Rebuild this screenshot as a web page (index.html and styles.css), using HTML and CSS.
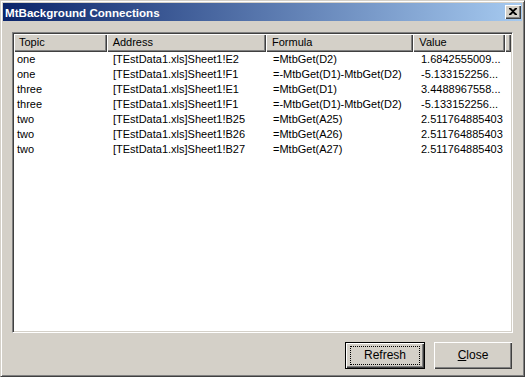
FILE: index.html
```html
<!DOCTYPE html>
<html>
<head>
<meta charset="utf-8">
<link rel="stylesheet" href="styles.css">
</head>
<body>
<div class="window">
  <div class="titlebar">
    <span class="title">MtBackground Connections</span>
    <button class="tb-close" aria-label="Close">
      <svg width="8" height="7" viewBox="0 0 8 7"><path d="M0 0h2l2 2 2-2h2v1L5 3.5 8 6v1H6L4 5 2 7H0V6l3-2.5L0 1z" fill="#000"/></svg>
    </button>
  </div>
  <div class="content">
    <div class="list">
      <div class="header">
        <div class="hcell c1">Topic</div>
        <div class="hcell c2">Address</div>
        <div class="hcell c3">Formula</div>
        <div class="hcell c4">Value</div>
        <div class="hcell filler"></div>
      </div>
      <div class="rows">
        <div class="row"><span class="c1">one</span><span class="c2">[TEstData1.xls]Sheet1!E2</span><span class="c3">=MtbGet(D2)</span><span class="c4">1.6842555009...</span></div>
        <div class="row"><span class="c1">one</span><span class="c2">[TEstData1.xls]Sheet1!F1</span><span class="c3">=-MtbGet(D1)-MtbGet(D2)</span><span class="c4">-5.133152256...</span></div>
        <div class="row"><span class="c1">three</span><span class="c2">[TEstData1.xls]Sheet1!E1</span><span class="c3">=MtbGet(D1)</span><span class="c4">3.4488967558...</span></div>
        <div class="row"><span class="c1">three</span><span class="c2">[TEstData1.xls]Sheet1!F1</span><span class="c3">=-MtbGet(D1)-MtbGet(D2)</span><span class="c4">-5.133152256...</span></div>
        <div class="row"><span class="c1">two</span><span class="c2">[TEstData1.xls]Sheet1!B25</span><span class="c3">=MtbGet(A25)</span><span class="c4">2.511764885403</span></div>
        <div class="row"><span class="c1">two</span><span class="c2">[TEstData1.xls]Sheet1!B26</span><span class="c3">=MtbGet(A26)</span><span class="c4">2.511764885403</span></div>
        <div class="row"><span class="c1">two</span><span class="c2">[TEstData1.xls]Sheet1!B27</span><span class="c3">=MtbGet(A27)</span><span class="c4">2.511764885403</span></div>
      </div>
    </div>
    <div class="buttons">
      <button class="btn default"><span class="focus">Refresh</span></button>
      <button class="btn"><span class="label"><u>C</u>lose</span></button>
    </div>
  </div>
</div>
</body>
</html>
```
FILE: styles.css
```css
html, body {
  margin: 0;
  padding: 0;
  background: #d4d0c8;
}
body {
  font-family: "Liberation Sans", Arial, sans-serif;
  font-size: 11px;
  color: #000;
}
.window {
  width: 525px;
  height: 377px;
  box-sizing: border-box;
  background: #d4d0c8;
  border: 1px solid;
  border-color: #d4d0c8 #404040 #404040 #d4d0c8;
  box-shadow: inset 1px 1px #fff, inset -1px -1px #808080;
  padding: 2px;
  display: flex;
  flex-direction: column;
}
.titlebar {
  height: 18px;
  background: linear-gradient(to right, #0a246a, #a6caf0);
  display: flex;
  align-items: center;
  justify-content: space-between;
  padding: 0 1px 0 2px;
  flex: none;
}
.title {
  color: #fff;
  font-weight: bold;
  font-size: 11.6px;
}
.tb-close {
  width: 16px;
  height: 14px;
  padding: 0;
  margin: 0;
  border: none;
  background: #d4d0c8;
  box-shadow: inset 1px 1px #fff, inset -1px -1px #404040, inset -2px -2px #808080;
  display: flex;
  align-items: center;
  justify-content: center;
}
.tb-close svg { display: block; margin-left: -1px; margin-top: -1px; }
.content {
  flex: 1;
  display: flex;
  flex-direction: column;
  padding: 11px 9px 5px 9px;
}
.list {
  height: 301px;
  box-sizing: border-box;
  background: #fff;
  border: 1px solid;
  border-color: #808080 #fff #fff #808080;
  box-shadow: inset 1px 1px #404040, inset -1px -1px #d4d0c8;
  padding: 1px;
  overflow: hidden;
}
.header {
  display: flex;
  height: 18px;
}
.hcell {
  box-sizing: border-box;
  height: 18px;
  background: #d4d0c8;
  box-shadow: inset 1px 1px #fff, inset -1px -1px #404040, inset -2px -2px #808080;
  padding: 0 0 0 6px;
  line-height: 17px;
}
.hcell.c1 { width: 93px; padding-left: 5px; }
.hcell.c2 { width: 160px; }
.hcell.c3 { width: 148px; }
.hcell.c4 { width: 92px; }
.hcell.filler { flex: 1; }
.row {
  display: flex;
  height: 15px;
  line-height: 15px;
  white-space: nowrap;
}
.row span { overflow: hidden; box-sizing: border-box; padding-left: 6px; }
.row .c1 { width: 93px; padding-left: 3px; }
.row .c2 { width: 160px; }
.row .c3 { width: 148px; }
.row .c4 { width: 92px; }
.buttons {
  margin-top: 9px;
  display: flex;
  justify-content: flex-end;
  gap: 9px;
  padding-right: 1px;
}
.btn {
  box-sizing: border-box;
  width: 78px;
  height: 27px;
  margin: 0;
  padding: 0;
  font-family: "Liberation Sans", Arial, sans-serif;
  font-size: 12px;
  color: #000;
  background: #d4d0c8;
  border: none;
  box-shadow: inset 1px 1px #fff, inset -1px -1px #404040, inset -2px -2px #808080;
  display: flex;
  align-items: center;
  justify-content: center;
}
.btn.default {
  width: 80px;
  border: 1px solid #000;
}
.btn .focus {
  box-sizing: border-box;
  width: 70px;
  height: 19px;
  line-height: 17px;
  border: 1px dotted #000;
  text-align: center;
}
.btn .label { line-height: 17px; }
```
